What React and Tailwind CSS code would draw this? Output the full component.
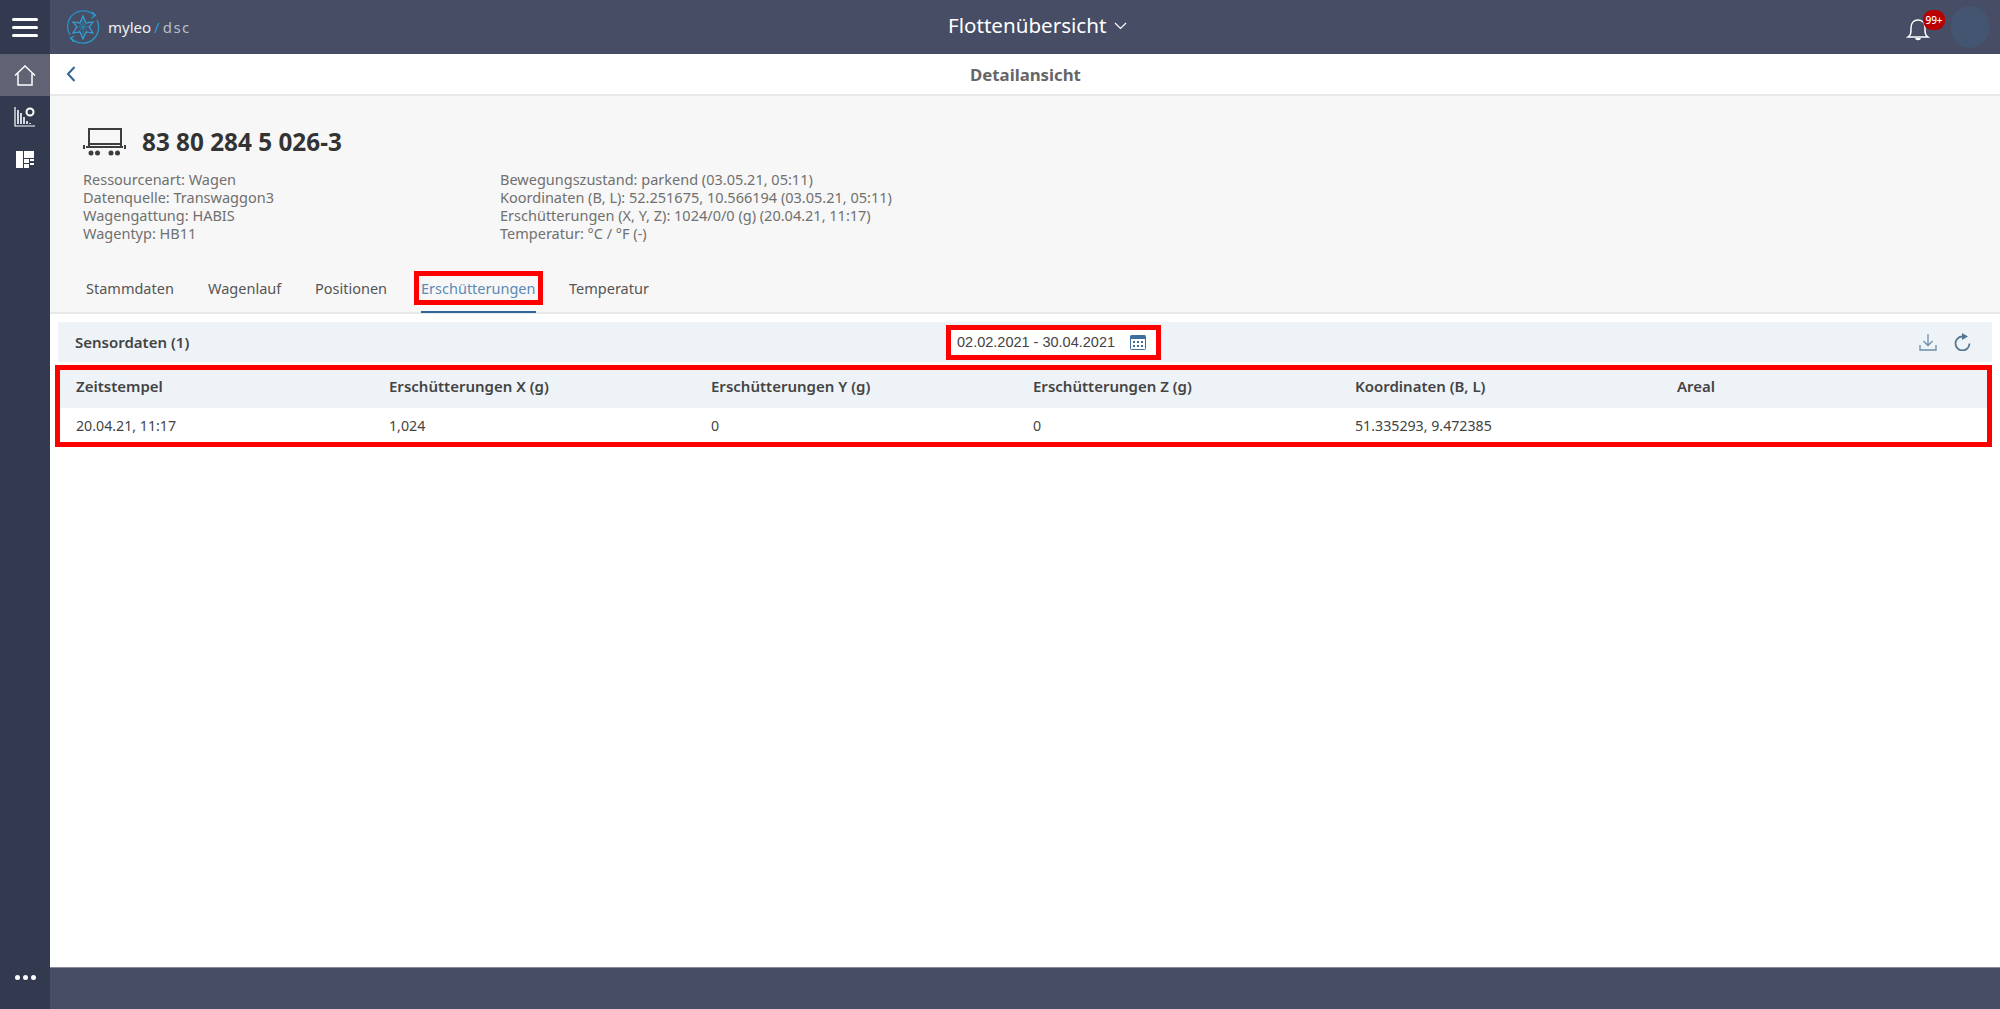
import React from "react";

const infoLeft = [
  "Ressourcenart: Wagen",
  "Datenquelle: Transwaggon3",
  "Wagengattung: HABIS",
  "Wagentyp: HB11",
];

const infoRight = [
  "Bewegungszustand: parkend (03.05.21, 05:11)",
  "Koordinaten (B, L): 52.251675, 10.566194 (03.05.21, 05:11)",
  "Erschütterungen (X, Y, Z): 1024/0/0 (g) (20.04.21, 11:17)",
  "Temperatur: °C / °F (-)",
];

const tabs = [
  { label: "Stammdaten", cls: "w-[122px]" },
  { label: "Wagenlauf", cls: "w-[107px]" },
  { label: "Positionen", cls: "w-[106px]" },
];

const columns = [
  { label: "Zeitstempel", value: "20.04.21, 11:17", cls: "w-[313px]" },
  { label: "Erschütterungen X (g)", value: "1,024", cls: "w-[322px]" },
  { label: "Erschütterungen Y (g)", value: "0", cls: "w-[322px]" },
  { label: "Erschütterungen Z (g)", value: "0", cls: "w-[322px]" },
  { label: "Koordinaten (B, L)", value: "51.335293, 9.472385", cls: "w-[322px]" },
  { label: "Areal", value: "", cls: "flex-1" },
];

const Logo = () => (
  <svg width="36" height="36" viewBox="0 0 36 36" fill="none">
    <path d="M30 7A16 16 0 0 0 6 7.500A16 16 0 0 0 5 26" stroke="#2a8fc4" strokeWidth="1.3" />
    <path d="M6 29A16 16 0 0 0 30 28.500A16 16 0 0 0 32 11" stroke="#2a9ac4" strokeWidth="1.3" />
    <path d="M27 3l3.500 3.500-4 2.500M9 33l-3.500-4 4-2" stroke="#2a9ad4" strokeWidth="1.3" />
    <path d="M18 7l3 7 7-1-4 5 4 6-7-1-3 7-3-7-7 1 4-6-4-5 7 1z" stroke="#35a4d8" strokeWidth="1.2" />
    <path d="M12 12l12 12M24 12L12 24M18 10v16M10 18h16" stroke="#2488bb" strokeWidth="0.9" />
  </svg>
);

const WagonIcon = () => (
  <svg width="43" height="28" viewBox="0 0 43 28" fill="none" stroke="#3d3d3d">
    <rect x="6" y="1" width="32" height="15" strokeWidth="2" />
    <path d="M6 16v3M38 16v3" strokeWidth="2" />
    <path d="M3 19h37" strokeWidth="2" />
    <path d="M1 17v4M42 17v4" strokeWidth="2" />
    <circle cx="8" cy="25" r="2.500" fill="#3d3d3d" stroke="none" />
    <circle cx="14.500" cy="25" r="2.500" fill="#3d3d3d" stroke="none" />
    <circle cx="28" cy="25" r="2.500" fill="#3d3d3d" stroke="none" />
    <circle cx="34.500" cy="25" r="2.500" fill="#3d3d3d" stroke="none" />
  </svg>
);

const App = () => {
  return (
    <div className="flex h-screen w-full overflow-hidden bg-white font-['Noto_Sans',sans-serif] text-[14px] text-[#3d3d3d]">
      <aside className="flex w-[50px] shrink-0 flex-col bg-[#333a4f]">
        <div className="flex h-[54px] flex-col items-center justify-center gap-[5px]">
          <span className="h-[3px] w-[26px] rounded-sm bg-white" />
          <span className="h-[3px] w-[26px] rounded-sm bg-white" />
          <span className="h-[3px] w-[26px] rounded-sm bg-white" />
        </div>
        <div className="flex h-[42px] items-center justify-center bg-[#5f6374]">
          <svg width="22" height="21" viewBox="0 0 22 21" fill="none" stroke="white" strokeWidth="1.500">
            <path d="M1 10.500L11 1l10 9.500" />
            <path d="M4 8.500V20h14V8.500" />
          </svg>
        </div>
        <div className="flex h-[42px] items-center justify-center">
          <svg width="22" height="20" viewBox="0 0 22 20" fill="none" stroke="white">
            <path d="M1 0v19h20" strokeWidth="1.200" />
            <path d="M4 17V3M7 17V6M10 17v-7M13 17v-3M16 17v-1" strokeWidth="1.600" />
            <circle cx="16" cy="5" r="3.500" strokeWidth="2" />
          </svg>
        </div>
        <div className="flex h-[42px] items-center justify-center">
          <svg width="18" height="17" viewBox="0 0 18 17" fill="white">
            <rect x="0" y="0" width="7" height="17" />
            <rect x="8" y="0" width="10" height="7" />
            <rect x="8" y="8" width="5" height="4" />
            <rect x="14" y="8" width="4" height="2" />
            <rect x="14" y="12" width="4" height="2" />
            <rect x="8" y="13" width="5" height="4" />
          </svg>
        </div>
        <div className="mt-auto mb-[29px] flex justify-center gap-[3px]">
          <span className="size-[5px] rounded-full bg-white" />
          <span className="size-[5px] rounded-full bg-white" />
          <span className="size-[5px] rounded-full bg-white" />
        </div>
      </aside>

      <main className="flex min-w-0 flex-1 flex-col">
        <header className="relative flex h-[54px] shrink-0 items-center bg-[#474d65] pl-[15px] pr-[11px] text-white">
          <Logo />
          <span className="ml-[7px] text-[15px] text-[#f0f0f0]">myleo</span>
          <span className="ml-[3px] text-[15px] text-[#2a9ad4]">/</span>
          <span className="ml-[3px] text-[15px] tracking-[1.5px] text-[#b9bcc8]">dsc</span>
          <div className="absolute left-[898px] top-[12px] flex items-center gap-[8px]">
            <span className="text-[20.6px] leading-[27px]">Flottenübersicht</span>
            <svg width="13" height="8" viewBox="0 0 13 8" fill="none" stroke="white" strokeWidth="1.200">
              <path d="M1 1l5.500 5.500L12 1" />
            </svg>
          </div>
          <div className="relative ml-auto mr-[9px] mt-[4px]">
            <svg width="24" height="24" viewBox="0 0 24 24" fill="none" stroke="white" strokeWidth="1.500">
              <path d="M2 20c3-2 3-4 3-9 0-5 3-8 7-8s7 3 7 8c0 5 0 7 3 9z" />
              <path d="M10 21c0 2 4 2 4 0" fill="white" />
            </svg>
            <span className="absolute -right-[15px] -top-[7px] flex h-[20px] w-[22px] items-center justify-center rounded-[9px] bg-[#b80000] text-[10px] font-medium">
              99+
            </span>
          </div>
          <div className="ml-[12px] h-[42px] w-[38px] rounded-full bg-[#435570]" />
        </header>

        <div className="flex h-[40px] shrink-0 items-center bg-white">
          <svg className="ml-[16px]" width="10" height="16" viewBox="0 0 10 16" fill="none" stroke="#2f6699" strokeWidth="2">
            <path d="M8.500 1L2 8l6.500 7" />
          </svg>
          <span className="ml-[894px] pt-[1px] text-[16.8px] font-bold text-[#666666]">Detailansicht</span>
        </div>

        <section className="h-[220px] shrink-0 border-t-2 border-b-2 border-[#e8e8e8] bg-[#f7f7f7]">
          <div className="flex items-center pl-[33px] pt-[30px]">
            <WagonIcon />
            <h1 className="ml-[16px] text-[24.3px] font-bold leading-[32px] text-[#333333]">83 80 284 5 026-3</h1>
          </div>
          <div className="mt-[12px] flex pl-[33px] text-[14.5px] leading-[18px] text-[#707070]">
            <div className="w-[417px]">
              {infoLeft.map((line) => (
                <div key={line}>{line}</div>
              ))}
            </div>
            <div>
              {infoRight.map((line) => (
                <div key={line}>{line}</div>
              ))}
            </div>
          </div>
          <div className="mt-[37px] flex pl-[36px] text-[14.5px] leading-[19px] text-[#555555]">
            {tabs.map((tab) => (
              <div key={tab.label} className={tab.cls}>
                {tab.label}
              </div>
            ))}
            <div className="relative w-[148px]">
              <span className="text-[#5b8ab5] outline-[5px] outline-[#ff0000] outline-offset-[2px] [outline-style:solid]">Erschütterungen</span>
              <span className="absolute left-0 top-[32px] h-[2px] w-[115px] bg-[#2f6699]" />
            </div>
            <div>Temperatur</div>
          </div>
        </section>

        <div className="mx-[8px] mt-[8px] flex h-[40px] shrink-0 items-center bg-[#eef3f8]">
          <span className="ml-[17px] w-[871px] text-[15px] font-semibold text-[#444444]">Sensordaten (1)</span>
          <div className="flex h-[35px] w-[215px] items-center border-[5px] border-[#ff0000] bg-white pl-[6px]">
            <span className="pt-[1px] font-['Liberation_Sans',sans-serif] text-[14.5px] text-[#444444]">02.02.2021 - 30.04.2021</span>
            <svg className="ml-[15px]" width="16" height="16" viewBox="0 0 16 16" fill="none">
              <rect x="0.500" y="1.500" width="15" height="14" rx="1" stroke="#3f6f9d" />
              <rect x="0.500" y="1.500" width="15" height="3.500" fill="#3f6f9d" />
              <path d="M3 7h2v2H3zM7 7h2v2H7zM11 7h2v2h-2zM3 11h2v2H3zM7 11h2v2H7zM11 11h2v2h-2z" fill="#3f6f9d" />
            </svg>
          </div>
          <svg className="ml-auto" width="18" height="17" viewBox="0 0 18 17" fill="none" stroke="#6d8eac" strokeWidth="1.300">
            <path d="M9 0v11M4.500 7L9 11.500 13.500 7" />
            <path d="M1 11v5h16v-5" />
          </svg>
          <svg className="ml-[17px] mr-[21px]" width="17" height="18" viewBox="0 0 17 18" fill="none" stroke="#56768f" strokeWidth="1.800">
            <path d="M8 3.500a7 7 0 1 0 7.500 7" />
            <path d="M8 0l6 3.500-6 3.500z" fill="#56768f" stroke="none" />
          </svg>
        </div>

        <div className="ml-[5px] mr-[8px] mt-[3px] shrink-0 border-[5px] border-[#ff0000] bg-white">
          <div className="flex h-[38px] items-center bg-[#eef3f8] pb-[5px] pl-[16px] text-[15px] font-semibold text-[#444444]">
            {columns.map((col) => (
              <div key={col.label} className={col.cls}>
                {col.label}
              </div>
            ))}
          </div>
          <div className="flex h-[34px] items-center pl-[16px] pt-[1px] text-[14.2px] text-[#444444]">
            {columns.map((col) => (
              <div key={col.label} className={col.cls}>
                {col.value}
              </div>
            ))}
          </div>
        </div>

        <footer className="mt-auto h-[42px] shrink-0 border-t border-[#8a8d99] bg-[#474d65]" />
      </main>
    </div>
  );
};

export default App;
